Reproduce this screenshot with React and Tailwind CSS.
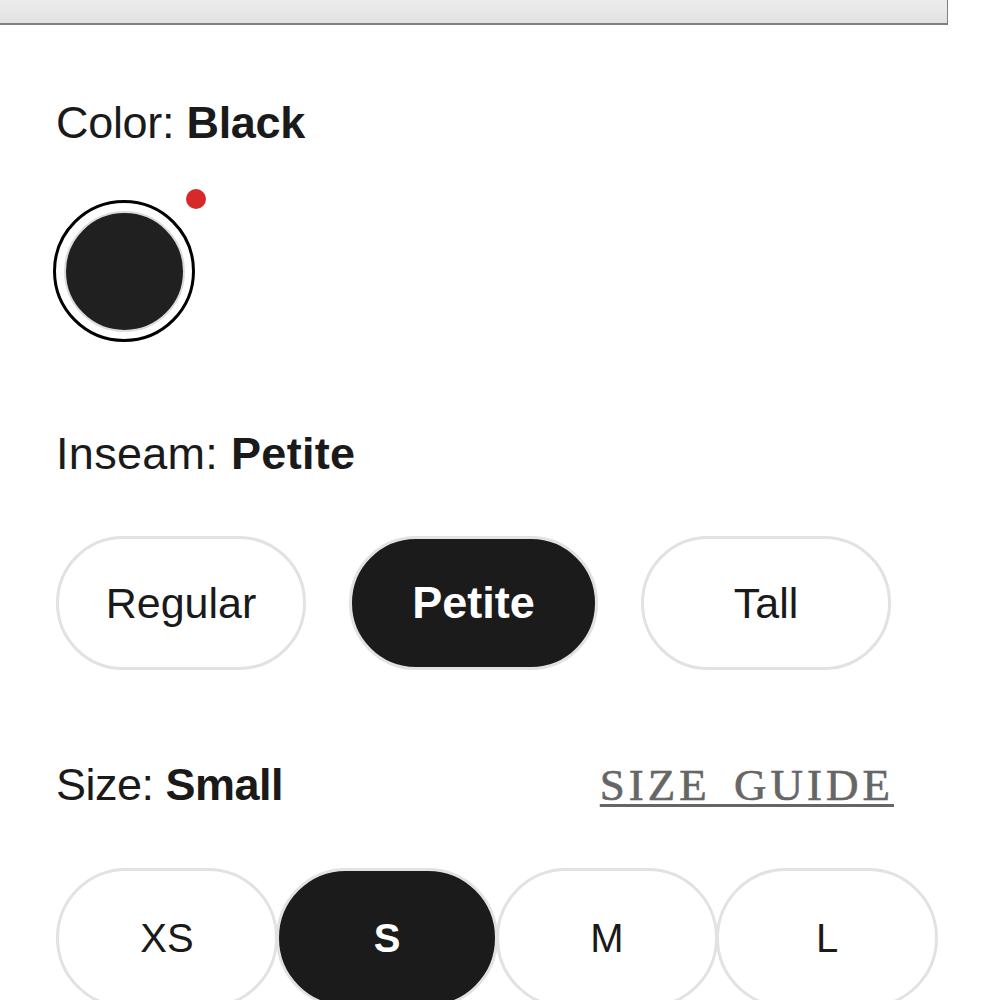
export default function App() {
  const sans = { fontFamily: '"Liberation Sans", Arial, Helvetica, sans-serif' };
  const sizes = ["XS", "S", "M", "L"];
  const inseams = ["Regular", "Petite", "Tall"];
  return (
    <div className="w-[1000px] h-[1000px] overflow-hidden bg-white text-[#1a1a1a]" style={sans}>
      <div className="h-[25px] w-[948px] bg-gradient-to-b from-[#ececec] to-[#e2e2e2] border-b-2 border-r border-[#808080]" />
      <div className="pl-[56px]">
        <div className="mt-[75px] h-[45px] leading-[45px] text-[45px] tracking-[-0.3px]">
          Color: <span className="font-bold">Black</span>
        </div>
        <div className="mt-[55px] -ml-[3px] relative w-[142px] h-[142px] rounded-full border-[3px] border-black flex items-center justify-center">
          <div className="w-[121px] h-[121px] rounded-full bg-[#202020] border-2 border-[#dcdcdc]" />
          <div className="absolute -top-[14px] -right-[14px] w-[20px] h-[20px] rounded-full bg-[#d7282a]" />
        </div>
        <div className="mt-[89px] h-[45px] leading-[45px] text-[45px] tracking-[0.3px]">
          Inseam: <span className="font-bold">Petite</span>
        </div>
        <div className="mt-[60px] flex gap-[43px]">
          {inseams.map((s) => (
            <div
              key={s}
              className={
                s === "Petite"
                  ? "w-[249px] h-[134px] rounded-full border-[3px] border-[#e2e2e2] bg-[#1b1b1b] text-white font-bold flex items-center justify-center text-[45px]"
                  : "w-[250px] h-[134px] rounded-full border-[3px] border-[#e2e2e2] bg-white flex items-center justify-center text-[43px]"
              }
            >
              {s}
            </div>
          ))}
        </div>
        <div className="mt-[92px] w-[835px] flex items-baseline justify-between">
          <div className="h-[45px] leading-[45px] text-[45px] tracking-[-0.5px]">
            Size: <span className="font-bold">Small</span>
          </div>
          <div
            className="text-[45px] leading-[45px] text-[#666666] tracking-[4px] [word-spacing:8px] underline decoration-[3px] underline-offset-[4px] -mr-[3px] [-webkit-text-stroke:0.6px_#666666]"
            style={{ fontFamily: '"Liberation Serif", "Times New Roman", serif' }}
          >
            SIZE GUIDE
          </div>
        </div>
        <div className="mt-[60px] flex">
          {sizes.map((s, i) => (
            <div
              key={s}
              className={
                (i > 0 ? "-ml-[2px] " : "") +
                (s === "S"
                  ? "w-[222px] h-[140px] rounded-full border-[3px] border-[#e2e2e2] bg-[#1b1b1b] text-white font-bold flex items-center justify-center text-[40px] relative"
                  : "w-[222px] h-[140px] rounded-full border-[3px] border-[#e2e2e2] bg-white flex items-center justify-center text-[40px]")
              }
            >
              {s}
            </div>
          ))}
        </div>
      </div>
    </div>
  );
}
